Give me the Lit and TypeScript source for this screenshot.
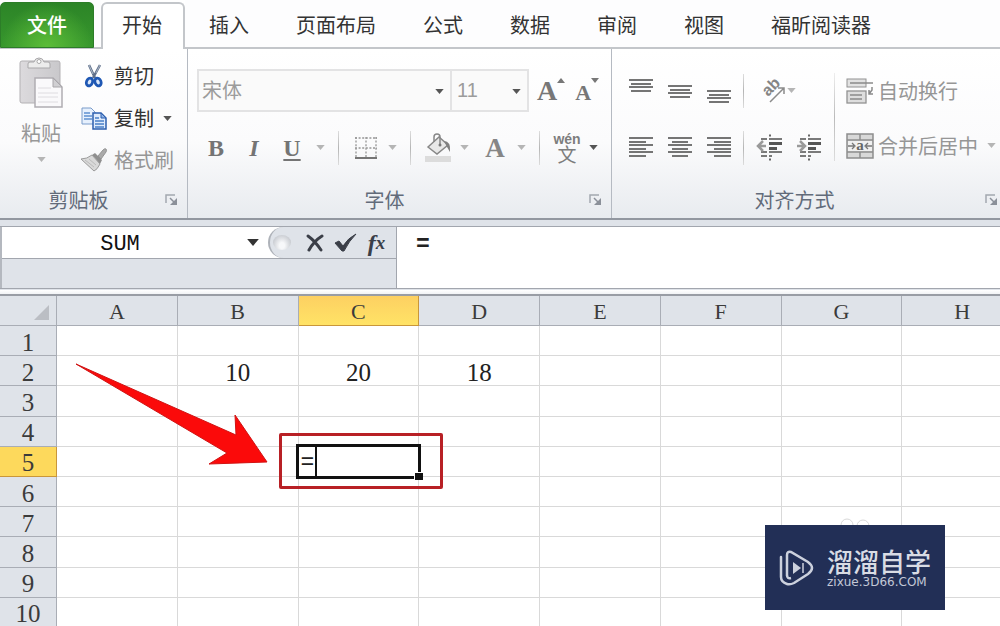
import { LitElement, html, css, svg, nothing } from "lit";
import { customElement, property } from "lit/decorators.js";

const TABS = ["插入", "页面布局", "公式", "数据", "审阅", "视图", "福昕阅读器"];
const COLUMNS = ["A", "B", "C", "D", "E", "F", "G", "H"];
const ROWS = [1, 2, 3, 4, 5, 6, 7, 8, 9, 10];
const VALUES: Record<string, string> = { B2: "10", C2: "20", D2: "18" };

const caret = (tone = "dark") =>
  html`<svg class="caret ${tone}" viewBox="0 0 10 6" aria-hidden="true"><path d="M0 0h10L5 6z" /></svg>`;

const bars = (rows: number[][]) =>
  html`<svg width="26" height="26" viewBox="0 0 26 26" aria-hidden="true">
    ${rows.map(([x, y, w]) => svg`<rect x=${x} y=${y} width=${w} height="2" fill="#757575" />`)}
  </svg>`;

const ALIGN_TOP = [[1, 1, 24], [3, 5, 20], [1, 8, 24], [3, 12, 20]];
const ALIGN_MIDDLE = [[1, 7, 24], [3, 11, 20], [1, 14, 24], [3, 18, 20]];
const ALIGN_BOTTOM = [[1, 12, 24], [3, 16, 20], [1, 19, 24], [3, 23, 20]];
const ALIGN_LEFT = [[1, 2, 24], [1, 6, 17], [1, 9, 24], [1, 13, 17], [1, 16, 24], [1, 20, 17]];
const ALIGN_CENTER = [[1, 2, 24], [5, 6, 16], [1, 9, 24], [5, 13, 16], [1, 16, 24], [5, 20, 16]];
const ALIGN_RIGHT = [[1, 2, 24], [8, 6, 17], [1, 9, 24], [8, 13, 17], [1, 16, 24], [8, 20, 17]];

const pasteIcon = html`<svg width="46" height="52" viewBox="0 0 46 52" aria-hidden="true">
  <defs>
    <linearGradient id="board" x1="0" x2="1"><stop offset="0" stop-color="#dcdadd" /><stop offset="1" stop-color="#c9c8cb" /></linearGradient>
  </defs>
  <rect x="2" y="4" width="40" height="42" rx="2" fill="url(#board)" stroke="#b3b1b4" />
  <path d="M10 11V7q0-2 2-2h4q1-4 5-4t5 4h4q2 0 2 2v4z" fill="#ececec" stroke="#a9a8aa" />
  <circle cx="21" cy="4.500" r="2" fill="#fff" stroke="#aaa" />
  <path d="M17 21h18l9 9v20H17z" fill="#faf9fb" stroke="#b0adb2" stroke-width="1.500" />
  <path d="M35 21v9h9z" fill="#d0cfd2" stroke="#a8a6aa" />
  <path d="M20 31h13M20 36h20M20 40h20M20 45h20" stroke="#dedce0" />
</svg>`;

const cutIcon = html`<svg width="26" height="26" viewBox="0 0 26 26" aria-hidden="true">
  <path d="M8 2l6 13M19 2l-7 13" stroke="#60708a" stroke-width="2.500" fill="none" />
  <path d="M8 2l4 9M19 2l-4 8" stroke="#aab6c6" />
  <ellipse cx="8.500" cy="19" rx="3" ry="4" transform="rotate(25 8.500 19)" fill="#dbe8fa" stroke="#1f58b4" stroke-width="2.800" />
  <ellipse cx="17" cy="19" rx="3" ry="4" transform="rotate(-25 17 19)" fill="#dbe8fa" stroke="#1f58b4" stroke-width="2.800" />
</svg>`;

const copyIcon = html`<svg width="26" height="26" viewBox="0 0 26 26" aria-hidden="true">
  <path d="M1 3h9l4 4v12H1z" fill="#e6f0fd" stroke="#7a9cca" />
  <path d="M3 8h6M3 11h8M3 14h8" stroke="#5d8ecf" stroke-width="1.500" />
  <path d="M12 8h8l5 5v11H12z" fill="#dfebfb" stroke="#2d5fae" stroke-width="1.500" />
  <path d="M20 8v5h5z" fill="#8fb3e6" stroke="#2d5fae" />
  <path d="M14 13h4M14 16h9M14 19h9M14 22h9" stroke="#4a80c8" stroke-width="1.300" />
</svg>`;

const brushIcon = html`<svg width="28" height="26" viewBox="0 0 28 26" aria-hidden="true">
  <path d="M18 9l5-6q2-2 3-1t0 3l-5 7z" fill="#aaa" stroke="#949494" />
  <path d="M12 8l3-2 7 7-2 4z" fill="#8f8f8f" />
  <path d="M12 8q-5 4-11 4l13 12q3-1 6-7z" fill="#d9d9d9" stroke="#9b9b9b" />
  <path d="M5 13l9 7M9 12l7 6" stroke="#bbb" fill="none" />
</svg>`;

const bordersIcon = html`<svg width="26" height="26" viewBox="0 0 26 26" aria-hidden="true">
  <path d="M2 3h22M2 13h22M3 2v20M13 2v20M23 2v20" stroke="#969696" stroke-width="1.300" stroke-dasharray="2 1.600" fill="none" />
  <path d="M2 23h22" stroke="#757575" stroke-width="2" />
</svg>`;

const fillIcon = html`<svg width="28" height="30" viewBox="0 0 28 30" aria-hidden="true">
  <rect x="1" y="23" width="26" height="6" fill="#dcdcdc" />
  <path d="M4 14L15 4l9 8-11 9z" fill="#e8e8e8" stroke="#878787" stroke-width="1.500" />
  <path d="M10 9V4q0-3 3-3t3 3v7" fill="none" stroke="#878787" stroke-width="1.500" />
  <circle cx="16" cy="12" r="1.500" fill="#777" />
  <path d="M20 8q7 0 6 11l-3-5z" fill="#808080" />
</svg>`;

const orientationIcon = html`<svg width="32" height="34" viewBox="0 0 32 34" aria-hidden="true">
  <text x="0" y="0" transform="translate(13 23) rotate(-45)" font-family="Liberation Sans" font-weight="bold" font-size="16" fill="#858585">ab</text>
  <path d="M15 28L29 14M23 14h6v6" fill="none" stroke="#8b8b8b" stroke-width="1.500" />
</svg>`;

const indentIcon = (increase: boolean) => html`<svg width="28" height="28" viewBox="0 0 28 28" aria-hidden="true">
  <path d="M5 5h6M13 5h13M5 22h6M13 22h3M5 18h6M13 18h13" stroke="#7a7a7a" stroke-width="1.800" />
  <path d="M13 9.500h13M13 14.500h8" stroke="#555" stroke-width="3" />
  <path d="M13 1.500h2M13 25.500h2" stroke="#666" stroke-width="2" />
  <path d=${increase ? "M2 12h6M5 7l5 5-5 5" : "M3 12h7M7 7l-5 5 5 5"} fill="none" stroke="#9a9a9a" stroke-width="2.500" />
</svg>`;

const wrapIcon = html`<svg width="28" height="28" viewBox="0 0 28 28" aria-hidden="true">
  <rect x="1" y="2" width="19" height="8" fill="#e2e2e2" stroke="#929292" />
  <path d="M4 6h23" stroke="#8a8a8a" stroke-width="1.500" />
  <rect x="1" y="14" width="19" height="12" fill="#dedede" stroke="#929292" stroke-width="1.300" />
  <path d="M4 18h12M4 22h12" stroke="#8a8a8a" stroke-width="1.500" />
  <path d="M26 10v3l-3 4M27 17h-4v-4" fill="none" stroke="#8a8a8a" stroke-width="1.500" />
</svg>`;

const mergeIcon = html`<svg width="28" height="28" viewBox="0 0 28 28" aria-hidden="true">
  <rect x="1" y="2" width="26" height="24" fill="#d8d8d8" stroke="#8d8d8d" stroke-width="1.500" />
  <path d="M1 8h26M1 20h26M14 2v6M14 20v6" stroke="#8d8d8d" stroke-width="1.500" />
  <rect x="2" y="9" width="24" height="10" fill="#f0f0f0" />
  <path d="M2 14h6M20 14h6M6 11l3 3-3 3M22 11l-3 3 3 3" fill="none" stroke="#777" stroke-width="1.300" />
  <text x="14" y="18" text-anchor="middle" font-family="Liberation Serif" font-weight="bold" font-size="15" fill="#666">a</text>
</svg>`;

@customElement("ribbon-group")
class RibbonGroup extends LitElement {
  @property() label = "";

  static styles = css`
    :host { display: flex; flex-direction: column; box-sizing: border-box; border-right: 1px solid #b5bac2; }
    .content { flex: 1; }
    .footer { display: grid; grid-template-columns: 1fr 30px; align-items: center; height: 36px; color: #626b7a; font-size: 20px; text-align: center; }
    button { display: grid; place-items: center; border: 0; padding: 0; background: none; }
  `;

  render() {
    return html`
      <div class="content"><slot></slot></div>
      <div class="footer">
        <span>${this.label}</span>
        <button aria-label=${this.label}>
          <svg width="14" height="14" viewBox="0 0 14 14" aria-hidden="true">
            <path d="M1 10V2h9" fill="none" stroke="#a3a8b0" stroke-width="1.500" />
            <path d="M5 5l5 5" stroke="#8b9099" stroke-width="1.500" />
            <path d="M12 5v7H5z" fill="#8b9099" />
          </svg>
        </button>
      </div>
    `;
  }
}

@customElement("app-root")
class AppRoot extends LitElement {
  static styles = css`
    :host {
      display: flex; flex-direction: column; position: relative; height: 100vh; overflow: hidden;
      background: #dfe3e9; color: #333; font: 20px/24px "Noto Sans CJK SC", sans-serif;
    }
    button, input, select { font: inherit; color: inherit; border: 0; padding: 0; margin: 0; background: none; border-radius: 0; outline: 0; box-sizing: border-box; }
    button { display: flex; align-items: center; justify-content: center; white-space: nowrap; }
    svg { display: block; flex: none; }

    .tabs { display: flex; height: 49px; flex: none; background: linear-gradient(#c3c6ca, #c3c6ca) bottom / 100% 2px no-repeat #fdfdfe; }
    .tab { height: 49px; padding: 0 23px 0 24px; }
    .file { width: 94px; height: 46px; margin: 2px 7px 0 0; border: 1px solid #2c7d28; border-radius: 5px 5px 0 0; color: #fff; font-weight: 500; background: radial-gradient(ellipse at 50% 100%, #5cbd38, transparent 70%), linear-gradient(#2c8427, #37972d); }
    .active { width: 84px; height: 47px; margin-top: 2px; padding: 0 2px 4px 0; border: 2px solid #c3c6ca; border-bottom: 0; border-radius: 6px 6px 0 0; background: #fff; }
    .start { height: 49px; background: #fff; }

    .ribbon { display: flex; flex: none; height: 171px; box-sizing: border-box; border-bottom: 2px solid #9297a0; background: linear-gradient(#fff, #fbfbfc 55%, #e8ebef); }
    .clip-group { flex: 0 0 188px; }
    .font-group { flex: 0 0 424px; }
    .align-group { flex: 1 0 396px; }
    .clipboard { display: flex; gap: 16px; padding: 8px 0 0 18px; }
    .paste { flex-direction: column; width: 46px; height: 112px; gap: 12px; justify-content: flex-start; color: #989898; }
    .actions { display: flex; flex-direction: column; align-items: flex-start; gap: 18px; padding-top: 7px; }
    .action { gap: 6px; height: 24px; }
    .action .caret { margin-left: 3px; }
    .action svg:first-child { width: 28px; }
    .off { color: #969696; }

    .rows { display: flex; flex-direction: column; gap: 14px; padding: 20px 0 0 9px; }
    .row { display: flex; align-items: center; height: 43px; }
    .combo { position: relative; height: 43px; border: 2px solid #e3e3e4; background: #fafafa; box-sizing: border-box; color: #9c9c9c; }
    .combo select { appearance: none; width: 100%; height: 37px; padding-left: 3px; }
    .combo .caret { position: absolute; right: 6px; top: 18px; pointer-events: none; }
    .family { width: 255px; }
    .size { width: 79px; margin-left: -2px; }
    .size select { font-family: "Liberation Sans", sans-serif; padding-left: 5px; }
    .letter, .icon, .drop, .grow { height: 36px; }
    .letter { width: 38px; font: bold 24px/28px "Liberation Serif", serif; color: #747474; }
    .italic { font-style: italic; }
    .under { text-decoration: underline; text-underline-offset: 3px; text-decoration-thickness: 2px; }
    .icon { width: 34px; }
    .drop { width: 18px; }
    .rule { width: 1px; height: 34px; margin: 0 10px 0 9px; background: linear-gradient(#ddd, #b5b5b5, #ddd); }
    .color { margin-left: 5px; font: bold 27px/30px "Liberation Serif", serif; color: #868686; }
    .sizes { display: flex; gap: 10px; padding-left: 8px; }
    .grow { gap: 0; align-items: flex-start; font: bold 28px/36px "Liberation Serif", serif; color: #777; }
    .grow.small { font-size: 22px; line-height: 40px; }
    .grow .caret { width: 8px; height: 5px; margin-top: 5px; fill: #777; }
    .phonetic { flex-direction: column; color: #7d7d7d; font-size: 19px; line-height: 18px; }
    .phonetic span:first-child { font: bold 14px/12px "Liberation Sans", sans-serif; }
    .caret { width: 9px; height: 5px; fill: #555; }
    .caret.light { fill: #b5b5b5; }

    .align { display: flex; padding-top: 20px; padding-left: 9px; }
    .stack { display: flex; flex-direction: column; gap: 14px; }
    .align .slot { width: 39px; height: 43px; }
    .align .rule { margin: 0 6px 0 5px; }
    .tall { width: 1px; height: 88px; margin: 4px 11px 0 6px; background: linear-gradient(#eee, #bbb, #ddd); }
    .orient { width: 50px; height: 43px; }
    .wide { gap: 4px; height: 43px; color: #969696; }
    .stack.last { align-items: flex-start; gap: 12px; }
    .wide .caret { margin-left: 5px; }

    .formula { display: grid; grid-template-columns: 397px 1fr; flex: none; height: 63px; margin-top: 6px; box-sizing: border-box; border-top: 1px solid #a2a6ae; border-bottom: 1px solid #a2a6ae; }
    .left { border-right: 1px solid #a2a6ae; border-left: 2px solid #b4b8bf; }
    .name { display: flex; height: 32px; box-sizing: border-box; border-bottom: 1px solid #a2a6ae; background: #fff; }
    .name input { flex: 1; min-width: 0; height: 31px; padding-top: 3px; text-align: center; color: #111; font: 22px/28px "Liberation Mono", monospace; }
    .name .drop { width: 30px; height: 31px; }
    .name .drop .caret { width: 12px; height: 7px; fill: #333; }
    .pill { display: flex; align-items: center; width: 128px; box-sizing: border-box; padding-left: 3px; border-left: 2px solid #aeb2b9; border-radius: 16px 0 0 16px; background: #dfe3e9; }
    .knob { width: 18px; height: 15px; margin-right: 8px; border-radius: 50%; background: radial-gradient(ellipse at 50% 70%, #f7f8fa 20%, #b3b7be); }
    .pill button { width: 31px; height: 30px; }
    .fx { font: italic bold 24px/28px "Liberation Serif", serif; color: #3a3f49; }
    .fx small { font-size: 19px; }
    .entry { background: #fff; }
    .entry input { width: 100%; height: 32px; padding: 3px 0 0 19px; font: bold 23px/28px "Liberation Mono", monospace; color: #222; }

    .sheet { flex: 1; min-height: 0; margin-top: 1px; padding-top: 4px; background: linear-gradient(#fff, #eef0f3) top / 100% 5px no-repeat #fff; }
    table { width: calc(100% + 23px); height: 334px; table-layout: fixed; border-collapse: separate; border-spacing: 0; border-top: 2px solid #999da5; font: 25px/22px "Liberation Serif", serif; text-align: center; }
    th, td { padding: 0; box-sizing: border-box; border-right: 1px solid #d9d9d9; border-bottom: 1px solid #d9d9d9; vertical-align: middle; }
    th { border-color: #a9adb5; background: #dfe3e9; color: #3b3b3b; font-weight: 400; }
    thead th { height: 30px; font-size: 22px; padding-top: 3px; }
    tbody th { padding-top: 4px; }
    td { padding-top: 4px; color: #222; background: #fff; }
    .corner { width: 57px; }
    .corner svg { margin: 0 7px 0 auto; }
    .hot { background: #fdd95c; border-color: #c9963a; }
    thead .hot { background: linear-gradient(#fdd062, #ffe366); }
    .edit { position: relative; padding: 0; }
    .cell { position: absolute; inset: -3px -3px -3px -3px; display: flex; border: 3px solid #111; background: #fff; }
    .cell input { width: 18px; height: 100%; padding: 3px 0 0 2px; border-right: 2px solid #111; font: 23px/26px "Liberation Mono", monospace; color: #222; }
    .handle { position: absolute; right: -5px; bottom: -4px; width: 8px; height: 7px; border: solid #fff; border-width: 1px 0 0 1px; background: #111; }
    .mark { position: absolute; inset: -14px -25px -13px -20px; border: 3px solid #b82025; border-radius: 2px; }
    .arrow { position: absolute; right: calc(100% + 31px); bottom: 9px; }

    .brand { position: absolute; right: 55px; bottom: 16px; display: flex; align-items: center; gap: 12px; width: 180px; height: 85px; padding-left: 14px; box-sizing: border-box; background: #222f56; color: #d9dce4; }
    .title { font-size: 26px; line-height: 28px; font-weight: 500; }
    .site { font: 12px/14px "DejaVu Sans", sans-serif; color: #c3c8d6; }
    .ears { position: absolute; left: 74px; bottom: 100%; }
  `;

  private cell(col: string, row: number) {
    if (col === "C" && row === 5) {
      return html`<td class="edit">
        <div class="cell"><input aria-label="C5" value="=" /><span class="handle"></span></div>
        <div class="mark"></div>
        <svg class="arrow" width="193" height="104" viewBox="0 0 193 104" aria-hidden="true">
          <path d="M1 1L161 72L160 52L192 99L134 101L152 90Z" fill="#fb0a0a" stroke="#d01313" />
        </svg>
      </td>`;
    }
    return html`<td>${VALUES[col + row] ?? nothing}</td>`;
  }

  render() {
    return html`
      <nav class="tabs">
        <button class="file">文件</button>
        <div class="start"><button class="active">开始</button></div>
        ${TABS.map((t) => html`<button class="tab">${t}</button>`)}
      </nav>

      <div class="ribbon">
        <ribbon-group class="clip-group" label="剪贴板">
          <div class="clipboard">
            <button class="paste">${pasteIcon}<span>粘贴</span>${caret("light")}</button>
            <div class="actions">
              <button class="action">${cutIcon}剪切</button>
              <button class="action">${copyIcon}复制${caret()}</button>
              <button class="action off">${brushIcon}格式刷</button>
            </div>
          </div>
        </ribbon-group>

        <ribbon-group class="font-group" label="字体">
          <div class="rows">
            <div class="row">
              <div class="combo family"><select aria-label="字体"><option>宋体</option></select>${caret()}</div>
              <div class="combo size"><select aria-label="字号"><option>11</option></select>${caret()}</div>
              <div class="sizes">
                <button class="grow" aria-label="增大字号">A<svg class="caret" viewBox="0 0 10 6"><path d="M0 6h10L5 0z" /></svg></button>
                <button class="grow small" aria-label="减小字号">A${caret()}</button>
              </div>
            </div>
            <div class="row">
              <button class="letter">B</button>
              <button class="letter italic">I</button>
              <button class="letter under">U</button>
              <button class="drop" aria-label="下划线">${caret("light")}</button>
              <span class="rule"></span>
              <button class="icon" aria-label="边框">${bordersIcon}</button>
              <button class="drop" aria-label="边框选项">${caret("light")}</button>
              <span class="rule"></span>
              <button class="icon" aria-label="填充颜色">${fillIcon}</button>
              <button class="drop" aria-label="填充选项">${caret("light")}</button>
              <button class="icon color" aria-label="字体颜色">A</button>
              <button class="drop" aria-label="颜色选项">${caret("light")}</button>
              <span class="rule"></span>
              <button class="icon phonetic"><span>wén</span><span>文</span></button>
              <button class="drop" aria-label="拼音选项">${caret()}</button>
            </div>
          </div>
        </ribbon-group>

        <ribbon-group class="align-group" label="对齐方式">
          <div class="align">
            <div class="stack">
              <div class="row">
                <button class="slot" aria-label="顶端对齐">${bars(ALIGN_TOP)}</button>
                <button class="slot" aria-label="垂直居中">${bars(ALIGN_MIDDLE)}</button>
                <button class="slot" aria-label="底端对齐">${bars(ALIGN_BOTTOM)}</button>
                <span class="rule"></span>
                <button class="orient" aria-label="方向">${orientationIcon}${caret("light")}</button>
              </div>
              <div class="row">
                <button class="slot" aria-label="左对齐">${bars(ALIGN_LEFT)}</button>
                <button class="slot" aria-label="居中">${bars(ALIGN_CENTER)}</button>
                <button class="slot" aria-label="右对齐">${bars(ALIGN_RIGHT)}</button>
                <span class="rule"></span>
                <button class="slot" aria-label="减少缩进量">${indentIcon(false)}</button>
                <button class="slot" aria-label="增加缩进量">${indentIcon(true)}</button>
              </div>
            </div>
            <span class="tall"></span>
            <div class="stack last">
              <button class="wide">${wrapIcon}自动换行</button>
              <button class="wide">${mergeIcon}合并后居中${caret("light")}</button>
            </div>
          </div>
        </ribbon-group>
      </div>

      <div class="formula">
        <div class="left">
          <div class="name">
            <input aria-label="名称框" value="SUM" />
            <button class="drop" aria-label="名称列表">${caret()}</button>
            <div class="pill">
              <span class="knob"></span>
              <button aria-label="取消">
                <svg width="18" height="18" viewBox="0 0 18 18"><path d="M2 2q7 5 13 14M16 2Q8 7 3 16" fill="none" stroke="#3b3f48" stroke-width="3" stroke-linecap="round" /></svg>
              </button>
              <button aria-label="输入">
                <svg width="24" height="20" viewBox="0 0 24 20"><path d="M1 10l4-2 4 5Q14 5 22 1q-7 7-12 17H8z" fill="#3b3f48" stroke="#3b3f48" /></svg>
              </button>
              <button class="fx" aria-label="插入函数">f<small>x</small></button>
            </div>
          </div>
        </div>
        <div class="entry"><input aria-label="编辑栏" value="=" /></div>
      </div>

      <div class="sheet">
        <table>
          <thead>
            <tr>
              <th class="corner"><svg width="15" height="15" viewBox="0 0 15 15"><path d="M15 0v15H0z" fill="#bbbec4" /></svg></th>
              ${COLUMNS.map((c) => html`<th scope="col" class=${c === "C" ? "hot" : ""}>${c}</th>`)}
            </tr>
          </thead>
          <tbody>
            ${ROWS.map((r) => html`<tr>
              <th scope="row" class=${r === 5 ? "hot" : ""}>${r}</th>
              ${COLUMNS.map((c) => this.cell(c, r))}
            </tr>`)}
          </tbody>
        </table>
      </div>

      <div class="brand">
        <svg class="ears" width="32" height="7" viewBox="0 0 32 7"><circle cx="8" cy="7" r="6" fill="none" stroke="#d8d8d8" /><circle cx="24" cy="8" r="6" fill="none" stroke="#d8d8d8" /></svg>
        <svg width="36" height="38" viewBox="0 0 36 38" aria-hidden="true">
          <path d="M8 26V6q0-4 4-3l17 10q8 6 0 12L15 34q-4 2-7 1-6-2-6-7V8" fill="none" stroke="#ccd1dd" stroke-width="2.500" stroke-linecap="round" />
          <path d="M8 26q0 4 4 3" fill="none" stroke="#ccd1dd" stroke-width="2.500" />
          <path d="M14 13l8 6-8 6z" fill="#ccd1dd" /><path d="M24 14v10" stroke="#ccd1dd" stroke-width="1.500" />
        </svg>
        <div><div class="title">溜溜自学</div><div class="site">zixue.3D66.COM</div></div>
      </div>
    `;
  }
}
